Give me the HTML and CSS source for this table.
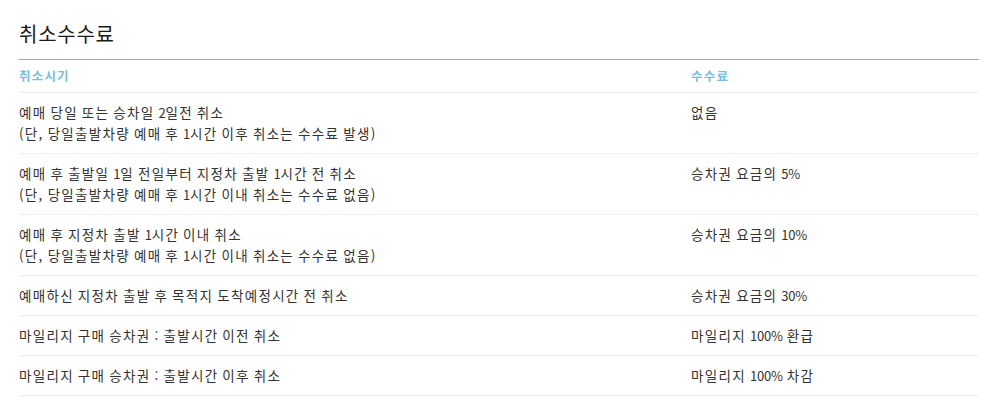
FILE: index.html
```html
<!DOCTYPE html>
<html lang="ko">
<head>
<meta charset="utf-8">
<title>취소수수료</title>
<link rel="stylesheet" href="styles.css">
</head>
<body>
<div class="wrap">
  <h2 class="title">취소수수료</h2>
  <table class="fee">
    <thead>
      <tr><th class="c1">취소시기</th><th class="c2">수수료</th></tr>
    </thead>
    <tbody>
      <tr><td>예매 당일 또는 승차일 <span class="num">2</span>일전 취소<br>(단, 당일출발차량 예매 후 <span class="num">1</span>시간 이후 취소는 수수료 발생)</td><td>없음</td></tr>
      <tr><td>예매 후 출발일 <span class="num">1</span>일 전일부터 지정차 출발 <span class="num">1</span>시간 전 취소<br>(단, 당일출발차량 예매 후 <span class="num">1</span>시간 이내 취소는 수수료 없음)</td><td>승차권 요금의 <span class="num">5%</span></td></tr>
      <tr><td>예매 후 지정차 출발 <span class="num">1</span>시간 이내 취소<br>(단, 당일출발차량 예매 후 <span class="num">1</span>시간 이내 취소는 수수료 없음)</td><td>승차권 요금의 <span class="num">10%</span></td></tr>
      <tr><td>예매하신 지정차 출발 후 목적지 도착예정시간 전 취소</td><td>승차권 요금의 <span class="num">30%</span></td></tr>
      <tr><td>마일리지 구매 승차권 : 출발시간 이전 취소</td><td>마일리지 <span class="num">100%</span> 환급</td></tr>
      <tr><td>마일리지 구매 승차권 : 출발시간 이후 취소</td><td>마일리지 <span class="num">100%</span> 차감</td></tr>
    </tbody>
  </table>
</div>
</body>
</html>
```

FILE: styles.css
```css
html, body {
  margin: 0;
  padding: 0;
  background: #fff;
}
body {
  font-family: "Noto Sans CJK KR", "Noto Sans", sans-serif;
  color: #333;
}
.wrap {
  padding: 20px 0 0 19px;
  width: 960px;
}
.title {
  margin: 0 0 11px;
  font-size: 20px;
  line-height: 28px;
  font-weight: 400;
  letter-spacing: 0.75px;
  color: #1a1a1a;
}
.fee {
  width: 960px;
  border-collapse: collapse;
  border-top: 1px solid #a5a5ad;
  table-layout: fixed;
}
.fee th {
  text-align: left;
  font-size: 12.5px;
  line-height: 20px;
  font-weight: 700;
  letter-spacing: 1.2px;
  color: #7bbcdc;
  padding: 6px 0;
  border-bottom: 1px solid #eee;
}
.fee .c1 { width: 672px; }
.fee td {
  font-size: 13.5px;
  line-height: 21px;
  letter-spacing: 1.3px;
  word-spacing: -1.1px;
  padding: 9px 0;
  vertical-align: top;
  border-bottom: 1px solid #eee;
  color: #333;
}
.num {
  font-size: 13px;
  letter-spacing: -0.2px;
}
```
